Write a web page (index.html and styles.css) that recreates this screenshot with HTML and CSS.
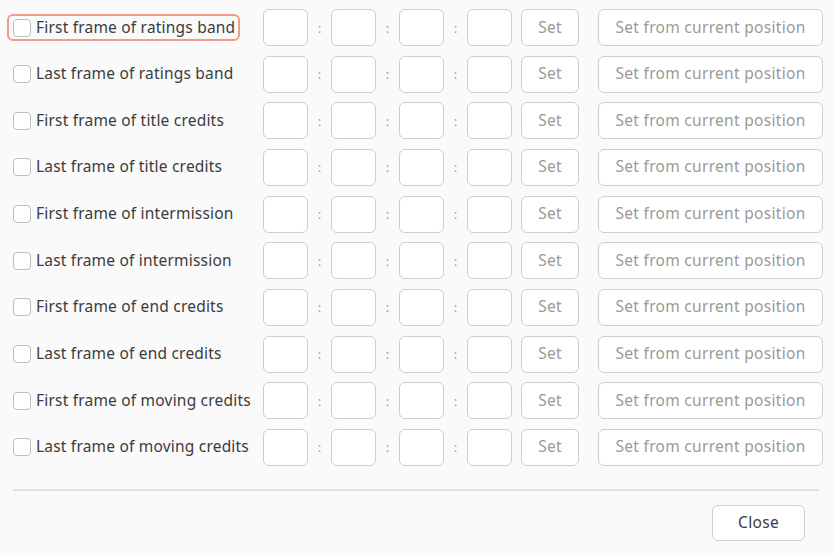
FILE: index.html
```html
<!DOCTYPE html>
<html lang="en">
<head>
  <meta charset="UTF-8">
  <title>Markers</title>
  <link rel="stylesheet" href="styles.css">
</head>
<body>
  <div class="dialog">
    <div class="rows">
      <div class="row">
        <label class="check-label focused"><span class="check"></span>First frame of ratings band</label>
        <span class="field"></span><span class="colon">:</span><span class="field"></span><span class="colon">:</span><span class="field"></span><span class="colon">:</span><span class="field"></span>
        <button class="btn set-btn">Set</button>
        <button class="btn pos-btn">Set from current position</button>
      </div>
      <div class="row">
        <label class="check-label"><span class="check"></span>Last frame of ratings band</label>
        <span class="field"></span><span class="colon">:</span><span class="field"></span><span class="colon">:</span><span class="field"></span><span class="colon">:</span><span class="field"></span>
        <button class="btn set-btn">Set</button>
        <button class="btn pos-btn">Set from current position</button>
      </div>
      <div class="row">
        <label class="check-label"><span class="check"></span>First frame of title credits</label>
        <span class="field"></span><span class="colon">:</span><span class="field"></span><span class="colon">:</span><span class="field"></span><span class="colon">:</span><span class="field"></span>
        <button class="btn set-btn">Set</button>
        <button class="btn pos-btn">Set from current position</button>
      </div>
      <div class="row">
        <label class="check-label"><span class="check"></span>Last frame of title credits</label>
        <span class="field"></span><span class="colon">:</span><span class="field"></span><span class="colon">:</span><span class="field"></span><span class="colon">:</span><span class="field"></span>
        <button class="btn set-btn">Set</button>
        <button class="btn pos-btn">Set from current position</button>
      </div>
      <div class="row">
        <label class="check-label"><span class="check"></span>First frame of intermission</label>
        <span class="field"></span><span class="colon">:</span><span class="field"></span><span class="colon">:</span><span class="field"></span><span class="colon">:</span><span class="field"></span>
        <button class="btn set-btn">Set</button>
        <button class="btn pos-btn">Set from current position</button>
      </div>
      <div class="row">
        <label class="check-label"><span class="check"></span>Last frame of intermission</label>
        <span class="field"></span><span class="colon">:</span><span class="field"></span><span class="colon">:</span><span class="field"></span><span class="colon">:</span><span class="field"></span>
        <button class="btn set-btn">Set</button>
        <button class="btn pos-btn">Set from current position</button>
      </div>
      <div class="row">
        <label class="check-label"><span class="check"></span>First frame of end credits</label>
        <span class="field"></span><span class="colon">:</span><span class="field"></span><span class="colon">:</span><span class="field"></span><span class="colon">:</span><span class="field"></span>
        <button class="btn set-btn">Set</button>
        <button class="btn pos-btn">Set from current position</button>
      </div>
      <div class="row">
        <label class="check-label"><span class="check"></span>Last frame of end credits</label>
        <span class="field"></span><span class="colon">:</span><span class="field"></span><span class="colon">:</span><span class="field"></span><span class="colon">:</span><span class="field"></span>
        <button class="btn set-btn">Set</button>
        <button class="btn pos-btn">Set from current position</button>
      </div>
      <div class="row">
        <label class="check-label"><span class="check"></span>First frame of moving credits</label>
        <span class="field"></span><span class="colon">:</span><span class="field"></span><span class="colon">:</span><span class="field"></span><span class="colon">:</span><span class="field"></span>
        <button class="btn set-btn">Set</button>
        <button class="btn pos-btn">Set from current position</button>
      </div>
      <div class="row">
        <label class="check-label"><span class="check"></span>Last frame of moving credits</label>
        <span class="field"></span><span class="colon">:</span><span class="field"></span><span class="colon">:</span><span class="field"></span><span class="colon">:</span><span class="field"></span>
        <button class="btn set-btn">Set</button>
        <button class="btn pos-btn">Set from current position</button>
      </div>
    </div>
    <div class="separator"></div>
    <div class="footer">
      <button class="btn close-btn">Close</button>
    </div>
  </div>
</body>
</html>
```

FILE: styles.css
```css
html, body {
  margin: 0;
  padding: 0;
  background: #fafafa;
  color: #3c3c3c;
  font-family: 'Noto Sans', 'Open Sans', sans-serif;
  font-size: 15.5px;
  letter-spacing: 0.2px;
}
.dialog {
  width: 833px;
  height: 556px;
  box-sizing: border-box;
  padding-top: 9px;
}
.rows {
  display: flex;
  flex-direction: column;
  gap: 9.67px;
  padding-left: 7px;
}
.row {
  display: flex;
  align-items: center;
  height: 37px;
}
.check-label {
  width: 233px;
  height: 27px;
  box-sizing: border-box;
  border: 2px solid transparent;
  border-radius: 6px;
  display: flex;
  align-items: center;
  padding: 0 0 2px 4px;
  margin-right: 23px;
  white-space: nowrap;
}
.check-label.focused {
  border-color: #ef9d86;
}
.check {
  width: 18px;
  height: 18px;
  box-sizing: border-box;
  border: 1px solid #bdbdbd;
  border-radius: 4px;
  background: #fff;
  margin: 2px 5px 0 0;
  flex: none;
}
.field {
  width: 45px;
  height: 37px;
  box-sizing: border-box;
  border: 1px solid #cdcdcd;
  border-radius: 6px;
  background: #fff;
  flex: none;
}
.colon {
  width: 23px;
  text-align: center;
  color: #a0a0a0;
  font-size: 13px;
}
.btn {
  height: 37px;
  box-sizing: border-box;
  border: 1px solid #cdcdcd;
  border-radius: 6px;
  background: #fff;
  font-family: inherit;
  font-size: 15.5px;
  letter-spacing: 0.3px;
  color: #9a9a9a;
  padding: 0 0 2px 0;
  flex: none;
}
.set-btn {
  width: 58px;
  margin-left: 9px;
}
.pos-btn {
  width: 225px;
  margin-left: 19px;
}
.separator {
  height: 2px;
  background: #e0e0e0;
  margin: 23px 14px 0 13px;
}
.footer {
  display: flex;
  justify-content: flex-end;
  padding: 14px 28px 0 0;
}
.close-btn {
  width: 93px;
  height: 36px;
  color: #3c3c3c;
}
```
